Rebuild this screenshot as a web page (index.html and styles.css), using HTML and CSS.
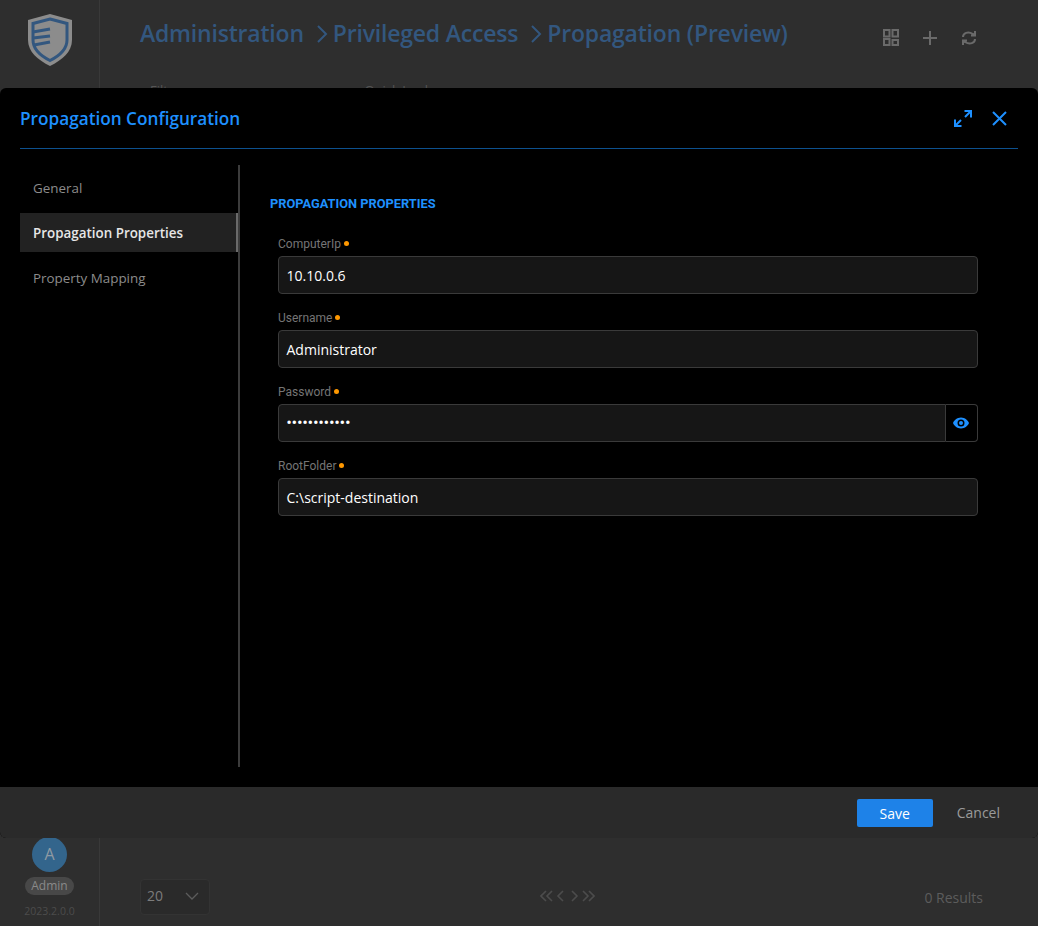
FILE: index.html
```html
<!DOCTYPE html>
<html lang="en">
<head>
  <meta charset="UTF-8">
  <title>Propagation Configuration</title>
  <link rel="stylesheet" href="styles.css">
</head>
<body>

  <div class="app">
    <!-- Sidebar behind the dialog -->
    <aside class="sidebar">
      <svg class="logo" viewBox="0 0 44 52" width="44" height="52">
        <path d="M22 0 L44 6 V26 C44 38 34 46 22 52 C10 46 0 38 0 26 V6 Z" fill="#8c8c8c"/>
        <path d="M22 5 L39 9.5 V26 C39 35 31 42 22 46.5 C13 42 5 35 5 26 V9.5 Z" fill="none" stroke="#33577f" stroke-width="3"/>
        <path d="M5 18 L22 15 M5 24 L22 22 M6 31 L22 28" fill="none" stroke="#33577f" stroke-width="3"/>
      </svg>
      <div class="user">
        <div class="avatar">A</div>
        <div class="role">Admin</div>
        <div class="version">2023.2.0.0</div>
      </div>
    </aside>

    <main class="page">
      <header class="page-head">
        <div class="crumbs">
          <span>Administration</span>
          <svg class="crumb-sep" viewBox="0 0 12 18" width="12" height="18"><path d="M2 1 L10 9 L2 17" fill="none" stroke="#33577f" stroke-width="2"/></svg>
          <span>Privileged Access</span>
          <svg class="crumb-sep" viewBox="0 0 12 18" width="12" height="18"><path d="M2 1 L10 9 L2 17" fill="none" stroke="#33577f" stroke-width="2"/></svg>
          <span>Propagation (Preview)</span>
        </div>
        <div class="page-tools">
          <svg viewBox="0 0 16 17" width="16" height="17" fill="none" stroke="#6a6a6a" stroke-width="2"><rect x="1" y="1" width="5.5" height="6.5"/><rect x="9.5" y="1" width="5.5" height="6.5"/><rect x="1" y="10" width="5.5" height="6"/><rect x="9.5" y="11" width="5.5" height="5"/></svg>
          <svg viewBox="0 0 14 14" width="14" height="14" stroke="#6a6a6a" stroke-width="2"><path d="M7 0 V14 M0 7 H14"/></svg>
          <svg viewBox="0 0 16 16" width="16" height="16" fill="none" stroke="#6a6a6a" stroke-width="2"><path d="M2 7 C2 3 7 1 12 4 L14 5 M14 1 V5.5 H10"/><path d="M14 9 C14 13 9 15 4 12 L2 11 M2 15 V10.5 H6"/></svg>
        </div>
      </header>
      <div class="filters"><span>Filter</span><span>Quick Lookup</span></div>
      <footer class="page-foot">
        <div class="per-page">20
          <svg viewBox="0 0 14 8" width="14" height="8"><path d="M1 1 L7 7 L13 1" fill="none" stroke="#5c5c5c" stroke-width="1.3"/></svg>
        </div>
        <div class="pager">
          <svg viewBox="0 0 55 12" width="55" height="12" fill="none" stroke="#4c4c4c" stroke-width="1.6"><path d="M6 1 L1 6 L6 11 M12 1 L7 6 L12 11 M23 1 L18 6 L23 11 M32 1 L37 6 L32 11 M43 1 L48 6 L43 11 M49 1 L54 6 L49 11"/></svg>
        </div>
        <div class="results">0 Results</div>
      </footer>
    </main>
  </div>

  <div class="modal">
    <div class="modal-head">
      <h2>Propagation Configuration</h2>
      <div class="modal-tools">
        <svg viewBox="0 0 18 17" width="18" height="17" fill="none" stroke="#1e90ff" stroke-width="2"><path d="M10.5 1 H17 V7.5 M17 1 L11 7"/><path d="M1 9.5 V16 H7.5 M1 16 L7 10"/></svg>
        <svg viewBox="0 0 15 15" width="15" height="15" fill="none" stroke="#1e90ff" stroke-width="2"><path d="M1 1 L14 14 M14 1 L1 14"/></svg>
      </div>
    </div>

    <div class="modal-body">
      <nav class="side-nav">
        <a>General</a>
        <a class="active">Propagation Properties</a>
        <a>Property Mapping</a>
      </nav>

      <section class="form">
        <h3>Propagation Properties</h3>

        <div class="field">
          <label>ComputerIp<i></i></label>
          <div class="input">10.10.0.6</div>
        </div>
        <div class="field">
          <label>Username<i></i></label>
          <div class="input">Administrator</div>
        </div>
        <div class="field">
          <label>Password<i></i></label>
          <div class="input-group">
            <div class="input secret">••••••••••••</div>
            <div class="addon">
              <svg viewBox="0 0 16 12" width="16" height="12"><path fill-rule="evenodd" d="M8 0.5 C12 0.5 15 3.5 16 6 C15 8.5 12 11.5 8 11.5 C4 11.5 1 8.5 0 6 C1 3.5 4 0.5 8 0.5 Z M8 2.5 A3.5 3.5 0 1 0 8 9.5 A3.5 3.5 0 1 0 8 2.5 Z" fill="#1e90ff"/><circle cx="8" cy="6" r="2" fill="#1e90ff"/></svg>
            </div>
          </div>
        </div>
        <div class="field">
          <label>RootFolder<i></i></label>
          <div class="input">C:\script-destination</div>
        </div>
      </section>
    </div>

    <div class="modal-foot">
      <button class="btn-save">Save</button>
      <button class="btn-cancel">Cancel</button>
    </div>
  </div>

</body>
</html>
```

FILE: styles.css
```css
html, body {
  margin: 0;
  height: 926px;
  overflow: hidden;
}
body {
  position: relative;
  background: #2e2e2e;
  font-family: "Open Sans", sans-serif;
}

.app {
  display: flex;
  height: 926px;
}
.sidebar {
  width: 99px;
  border-right: 1px solid #393939;
  display: flex;
  flex-direction: column;
  align-items: center;
  justify-content: space-between;
}
.logo {
  margin-top: 14px;
}
.user {
  display: flex;
  flex-direction: column;
  align-items: center;
  padding-bottom: 7px;
}
.avatar {
  width: 35px;
  height: 35px;
  border-radius: 50%;
  background: #33658c;
  color: #8f9aa3;
  font-size: 16px;
  line-height: 35px;
  text-align: center;
}
.role {
  margin-top: 5px;
  padding: 0 6px;
  height: 18px;
  line-height: 18px;
  border-radius: 9px;
  background: #484848;
  color: #8a8a8a;
  font-size: 12px;
}
.version {
  margin-top: 8px;
  font-size: 10.5px;
  line-height: 16px;
  color: #4c4c4c;
}

.page {
  flex: 1;
  display: flex;
  flex-direction: column;
  padding: 0 61px 0 40px;
}
.page-head {
  height: 67px;
  display: flex;
  align-items: center;
  justify-content: space-between;
}
.crumbs {
  display: flex;
  align-items: center;
  margin-top: -2px;
  color: #33577f;
  font-size: 23px;
  font-weight: 600;
  letter-spacing: -0.2px;
}
.crumb-sep {
  margin: 2px 5px 0 12px;
}
.page-tools {
  display: flex;
  align-items: center;
  gap: 24px;
  margin-top: 8px;
}
.filters {
  display: flex;
  gap: 184px;
  padding: 14px 10px 0;
  font-size: 13px;
  color: #555;
}
.page-foot {
  margin-top: auto;
  margin-right: -6px;
  height: 58px;
  display: flex;
  align-items: center;
  justify-content: space-between;
}
.per-page {
  width: 70px;
  height: 36px;
  box-sizing: border-box;
  padding: 0 10px 3px 6px;
  display: flex;
  align-items: center;
  justify-content: space-between;
  background: #2a2a2a;
  border: 1px solid #333;
  border-radius: 4px;
  color: #7c7c7c;
  font-size: 14px;
}
.pager {
  display: flex;
  margin-bottom: 3px;
}
.results {
  color: #5c5c5c;
  font-size: 14px;
}

/* dialog lies over the page */
.modal {
  position: absolute;
  left: 0;
  top: 88px;
  width: 1038px;
  height: 750px;
  display: flex;
  flex-direction: column;
  background: #000;
  border-radius: 6px;
  overflow: hidden;
}
.modal-head {
  height: 60px;
  margin: 0 20px;
  border-bottom: 1px solid #0d518f;
  display: flex;
  align-items: center;
  justify-content: space-between;
}
.modal-head h2 {
  margin: 0;
  color: #1e90ff;
  font-size: 17.2px;
  font-weight: 600;
}
.modal-tools {
  display: flex;
  align-items: center;
  gap: 20px;
  margin-right: 11px;
}
.modal-body {
  flex: 1;
  display: flex;
  padding: 16px 0 20px 20px;
}
.side-nav {
  width: 218px;
  border-right: 2px solid #3c3c3c;
  display: flex;
  flex-direction: column;
  gap: 6px;
  padding-top: 3px;
}
.side-nav a {
  height: 39px;
  line-height: 41px;
  padding-left: 13px;
  color: #8c8c8c;
  font-size: 13.4px;
}
.side-nav a.active {
  background: #222;
  border-right: 2px solid #6a6a6a;
  color: #e6e6e6;
  font-weight: 600;
}
.form {
  flex: 1;
  padding: 0 60px 0 30px;
}
.form h3 {
  margin: 31px 0 20px;
  color: #1e90ff;
  font-family: Roboto, sans-serif;
  font-size: 12.8px;
  font-weight: 700;
  line-height: 16px;
  text-transform: uppercase;
}
.field {
  margin: 0 0 0 8px;
  height: 74px;
}
.field label {
  display: block;
  height: 24px;
  line-height: 16px;
  padding-top: 4px;
  box-sizing: border-box;
  color: #757575;
  font-family: Roboto, sans-serif;
  font-size: 12px;
}
.field label i {
  display: inline-block;
  width: 5px;
  height: 5px;
  margin-left: 3px;
  border-radius: 50%;
  background: #ff9800;
  vertical-align: 2px;
}
.input {
  height: 38px;
  box-sizing: border-box;
  line-height: 38px;
  padding: 0 8px 0 7.5px;
  background: #161616;
  border: 1px solid #3a3a3a;
  border-radius: 4px;
  color: #fff;
  font-size: 14px;
}
.input-group {
  display: flex;
}
.input-group .input {
  flex: 1;
  border-radius: 4px 0 0 4px;
}
.input.secret {
  line-height: 36px;
  font-family: Roboto, sans-serif;
  font-size: 14px;
  font-weight: 700;
  letter-spacing: 0.3px;
}
.addon {
  width: 32px;
  height: 38px;
  box-sizing: border-box;
  border: 1px solid #3a3a3a;
  border-left: 0;
  border-radius: 0 4px 4px 0;
  display: flex;
  align-items: center;
  justify-content: center;
  padding-right: 2px;
}
.modal-foot {
  height: 51px;
  background: #2a2a2a;
  display: flex;
  align-items: center;
  justify-content: flex-end;
  padding: 0 38px 0 0;
}
.btn-save {
  width: 76px;
  height: 28px;
  margin: 1px 24px 0 0;
  border: 0;
  border-radius: 2px;
  background: #1e82e8;
  color: #fff;
  font-family: "Open Sans", sans-serif;
  font-size: 14px;
  font-weight: 500;
}
.btn-cancel {
  padding: 0;
  border: 0;
  background: none;
  color: #9a9a9a;
  font-family: "Open Sans", sans-serif;
  font-size: 14px;
}
```
